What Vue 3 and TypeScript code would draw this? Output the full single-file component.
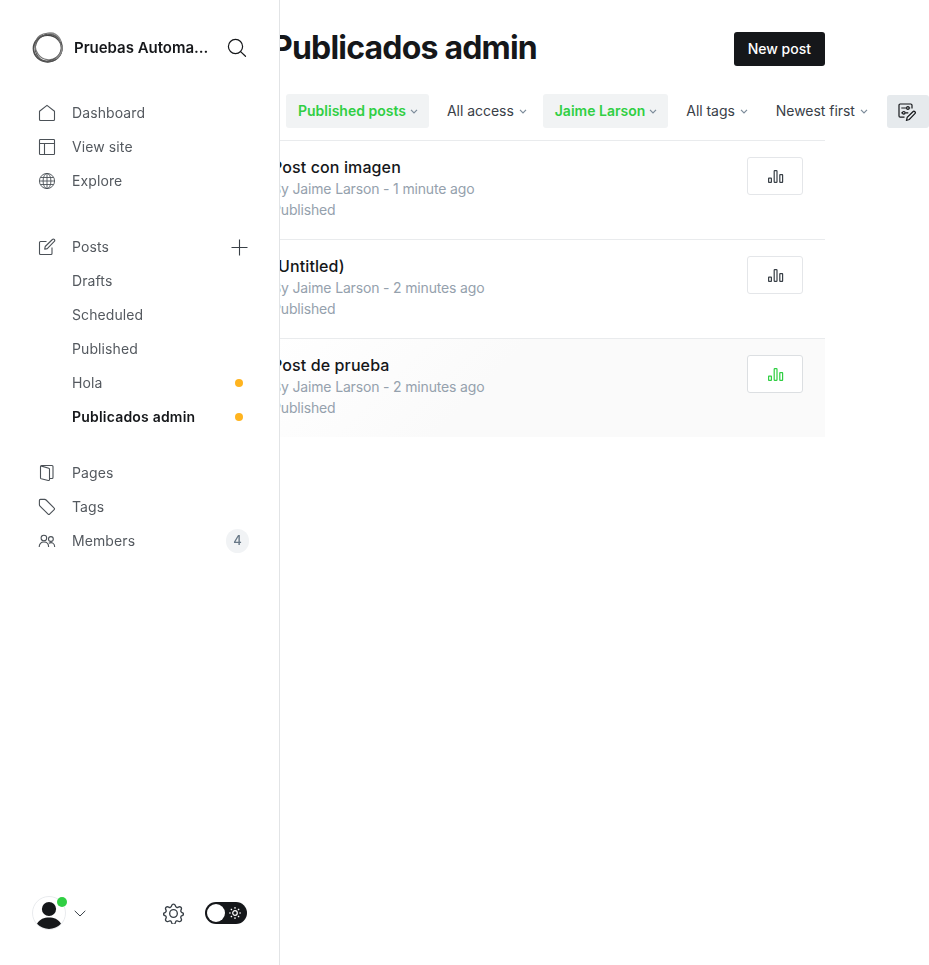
<script setup lang="ts">
interface Post {
  title: string
  byline: string
  active?: boolean
}

interface Filter {
  label: string
  selected?: boolean
}

const posts: Post[] = [
  { title: 'Post con imagen', byline: 'By Jaime Larson - 1 minute ago' },
  { title: '(Untitled)', byline: 'By Jaime Larson - 2 minutes ago' },
  { title: 'Post de prueba', byline: 'By Jaime Larson - 2 minutes ago', active: true },
]

const filters: Filter[] = [
  { label: 'Published posts', selected: true },
  { label: 'All access' },
  { label: 'Jaime Larson', selected: true },
  { label: 'All tags' },
  { label: 'Newest first' },
]

const views = [
  { label: 'Drafts' },
  { label: 'Scheduled' },
  { label: 'Published' },
  { label: 'Hola', dot: true },
  { label: 'Publicados admin', dot: true, current: true },
]
</script>

<template>
  <div class="app">
    <nav class="sidebar">
      <header class="site">
        <svg class="logo" viewBox="0 0 32 32" fill="none">
          <ellipse cx="15.6" cy="16.6" rx="14.2" ry="13.4" stroke="#444" stroke-width="1.5" />
          <ellipse cx="16.6" cy="15.6" rx="13.3" ry="13.9" stroke="#555" stroke-width="1.2" transform="rotate(28 16 16)" />
          <ellipse cx="17" cy="15" rx="12.7" ry="13.6" stroke="#777" stroke-width="1.3" transform="rotate(-38 16 16)" />
          <ellipse cx="15.6" cy="16.2" rx="13" ry="14.2" stroke="#555" stroke-width=".9" transform="rotate(65 16 16)" />
          <path d="M15 1.800C21-.5 27 3 29 10M29.800 13c1 6-2 11-6 14" stroke="#888" stroke-width="1.500" />
        </svg>
        <span class="site-name">Pruebas Automa...</span>
        <svg class="search" viewBox="0 0 20 20" fill="none" stroke="#15171a" stroke-width="1.2" stroke-linecap="round">
          <circle cx="8.5" cy="8.5" r="7.1" /><path d="M13.600 13.600l4.900 4.700" />
        </svg>
      </header>

      <div class="group">
        <a class="item">
          <svg class="icon" viewBox="0 0 18 18"><path d="M1.500 7.200L9 1.400l7.500 5.800v8.300a1 1 0 0 1-1 1h-13a1 1 0 0 1-1-1z" /></svg>
          <span>Dashboard</span>
        </a>
        <a class="item">
          <svg class="icon" viewBox="0 0 18 18"><rect x="1.5" y="1.5" width="15" height="15" rx=".8" /><path d="M1.5 5.5h15M6.5 5.5v11" /></svg>
          <span>View site</span>
        </a>
        <a class="item">
          <svg class="icon thin" viewBox="0 0 18 18"><circle cx="9" cy="9" r="7.6" /><ellipse cx="9" cy="9" rx="3.900" ry="7.600" /><path d="M9 1.400v15.200M1.400 9h15.200M2.600 5.500h12.800M2.600 12.500h12.800" /></svg>
          <span>Explore</span>
        </a>
      </div>

      <div class="group">
        <a class="item">
          <svg class="icon" viewBox="0 0 18 18"><path d="M8.500 3.500H2.500a1 1 0 0 0-1 1v11a1 1 0 0 0 1 1h10.500a1 1 0 0 0 1-1V9.500" /><path d="M6.700 11.200l.5-2.700 7.200-7a1.300 1.300 0 0 1 1.900 1.900l-7 7.200z" /></svg>
          <span>Posts</span>
          <svg class="plus" viewBox="0 0 17 17"><path d="M8.5 .5v16M.5 8.5h16" /></svg>
        </a>
        <a v-for="view in views" :key="view.label" class="item child" :class="{ current: view.current }">
          <span>{{ view.label }}</span>
          <i v-if="view.dot" class="dot"></i>
        </a>
      </div>

      <div class="group">
        <a class="item">
          <svg class="icon" viewBox="0 0 18 18"><path d="M11.500 14.500h2.500a1 1 0 0 0 1-1v-11a1 1 0 0 0-1-1H3.500a1 1 0 0 0-1 1v11.200a1 1 0 0 0 .7 1l7 1.800a1 1 0 0 0 1.300-1V5.300a1 1 0 0 0-.7-1L2.800 1.900" /></svg>
          <span>Pages</span>
        </a>
        <a class="item">
          <svg class="icon" viewBox="0 0 18 18"><path d="M2.400 1.400h4.300a2 2 0 0 1 1.400.6l8.100 8.100a1 1 0 0 1 0 1.500l-4.600 4.600a1 1 0 0 1-1.500 0L2 8.100a2 2 0 0 1-.6-1.400V2.400a1 1 0 0 1 1-1z" /></svg>
          <span>Tags</span>
        </a>
        <a class="item">
          <svg class="icon" viewBox="0 0 18 18"><circle cx="5.900" cy="6" r="2.800" /><circle cx="12.900" cy="7" r="2.400" /><path d="M1.200 15c0-3.300 1.800-5 4.700-5s4.700 1.700 4.700 5M10.800 11.200c2.900-1.500 5.900 0 5.900 3.800" /></svg>
          <span>Members</span>
          <b class="count">4</b>
        </a>
      </div>

      <footer class="account">
        <div class="avatar">
          <svg viewBox="0 0 34 34">
            <circle cx="17" cy="17" r="16.500" fill="#fff" stroke="#e9ebee" />
            <circle cx="17" cy="13" r="7.100" fill="#15171a" />
            <path d="M5 27.700c3-4.600 7-6.200 12-6.200s9 1.600 12 6.200a16.500 16.500 0 0 1-24 0z" fill="#15171a" />
          </svg>
          <i class="online"></i>
        </div>
        <svg class="chevron" viewBox="0 0 12 7"><path d="M.7 .8L6 6 11.300 .8" /></svg>
        <svg class="gear" viewBox="0 0 22 22">
          <circle cx="11" cy="11" r="4" />
          <path d="M9.100 2.600a2 2 0 0 1 3.800 0l.3.900a1.800 1.800 0 0 0 2.500 1l.9-.4a2 2 0 0 1 2.600 2.600l-.4.900a1.800 1.800 0 0 0 1 2.400l.5.200a1.500 1.500 0 0 1 0 2.900l-.5.200a1.800 1.800 0 0 0-1 2.500l.4.900a2 2 0 0 1-2.600 2.600l-.9-.4a1.800 1.800 0 0 0-2.500 1l-.3.900a2 2 0 0 1-3.800 0l-.3-.9a1.800 1.800 0 0 0-2.500-1l-.9.400a2 2 0 0 1-2.600-2.600l.4-.9a1.800 1.800 0 0 0-1-2.500l-.5-.2a1.500 1.500 0 0 1 0-2.900l.5-.2a1.800 1.800 0 0 0 1-2.400l-.4-.9a2 2 0 0 1 2.600-2.600l.9.400a1.800 1.800 0 0 0 2.500-1z" />
        </svg>
        <div class="toggle">
          <i class="knob"></i>
          <svg viewBox="0 0 12 12"><circle cx="6" cy="6" r="2.300" /><path d="M6 0v1.800M6 10.200V12M0 6h1.800M10.200 6H12M1.800 1.800L3 3M9 9l1.200 1.200M10.200 1.800L9 3M3 9l-1.200 1.200" /></svg>
        </div>
      </footer>
    </nav>

    <main class="main">
      <div class="content">
        <header class="heading">
          <h1>Publicados admin</h1>
          <button class="new-post">New post</button>
        </header>

        <div class="filters">
          <button v-for="filter in filters" :key="filter.label" class="filter" :class="{ selected: filter.selected }">
            <span>{{ filter.label }}</span>
            <svg viewBox="0 0 8 5"><path d="M1 .8l3 3 3-3" /></svg>
          </button>
          <button class="customize">
            <svg viewBox="0 0 18 18">
              <path d="M6.500 14.200H2.200a1.200 1.200 0 0 1-1.200-1.200V2.200A1.200 1.200 0 0 1 2.200 1h10.600A1.200 1.200 0 0 1 14 2.200v3.300M3.300 5h5.200M3.300 9.800h1M7.300 9.800h3" />
              <circle cx="9.900" cy="5" r="1.300" /><circle cx="5.800" cy="9.800" r="1.300" /><path d="M11.200 5h1" />
              <path d="M8.500 17.300l.7-3 5.700-5.600a1.400 1.400 0 0 1 2 2l-5.600 5.800z" />
            </svg>
          </button>
        </div>

        <ol class="posts">
          <li v-for="post in posts" :key="post.title" class="post" :class="{ active: post.active }">
            <div class="details">
              <h3>{{ post.title }}</h3>
              <p>{{ post.byline }}</p>
              <p>Published</p>
            </div>
            <a class="stats">
              <svg viewBox="0 0 16 14"><rect x=".6" y="8.100" width="2.800" height="4.300" rx=".3" /><rect x="6.200" y=".6" width="2.800" height="11.800" rx=".6" /><rect x="11.800" y="4.600" width="2.800" height="7.800" rx=".3" /></svg>
            </a>
          </li>
        </ol>
      </div>
    </main>
  </div>
</template>

<style>
body {
  margin: 0;
  background: #fff;
}
</style>

<style scoped>
* {
  box-sizing: border-box;
}

svg {
  display: block;
  flex: none;
}

button {
  border: 0;
  font: inherit;
}

.app {
  display: flex;
  height: 965px;
  overflow: hidden;
  font-family: Inter, sans-serif;
  font-size: 14px;
  color: #15171a;
}

.sidebar {
  display: flex;
  flex: none;
  flex-direction: column;
  width: 280px;
  padding: 32px 30px 35px 32px;
  border-right: 1px solid #e2e4e6;
  background: #fff;
  will-change: transform;
}

.site {
  display: flex;
  align-items: center;
  height: 32px;
  margin-bottom: 32px;
}

.logo {
  width: 32px;
  height: 32px;
}

.site-name {
  flex: 1;
  margin-left: 10px;
  padding-bottom: 1px;
  font-size: 15px;
  font-weight: 600;
  letter-spacing: -0.02px;
  white-space: nowrap;
}

.search {
  width: 20px;
  height: 20px;
  margin-right: 2px;
}

.group {
  display: flex;
  flex-direction: column;
  margin-bottom: 32px;
}

.group + .group {
  margin-bottom: 22px;
}

.item {
  display: flex;
  align-items: center;
  height: 34px;
  padding-left: 6px;
  letter-spacing: 0.1px;
  color: #54595f;
}

.item > span {
  flex: 1;
  padding-bottom: 1px;
}

.icon {
  width: 18px;
  height: 18px;
  margin-right: 16px;
  fill: none;
  stroke: #4b5157;
  stroke-width: 1.1;
  stroke-linejoin: round;
}

.thin {
  stroke-width: 0.9;
}

.child {
  padding-left: 40px;
}

.current {
  font-weight: 600;
  letter-spacing: 0.2px;
  color: #15171a;
}

.plus {
  width: 17px;
  height: 17px;
  margin-right: 1.5px;
  stroke: #394047;
  stroke-width: 1.1;
}

.dot {
  width: 8px;
  height: 8px;
  margin-right: 6px;
  border-radius: 50%;
  background: #ffb41f;
}

.count {
  width: 23px;
  height: 24px;
  border-radius: 12px;
  background: #f1f3f5;
  font-size: 13px;
  font-weight: 500;
  line-height: 23px;
  text-align: center;
  color: #687887;
}

.account {
  display: flex;
  align-items: center;
  height: 34px;
  margin-top: auto;
}

.avatar {
  position: relative;
  width: 34px;
  height: 34px;
}

.avatar > svg {
  width: 34px;
  height: 34px;
}

.online {
  position: absolute;
  top: 1px;
  right: -1px;
  width: 10px;
  height: 10px;
  border-radius: 50%;
  background: #30cf43;
}

.chevron {
  width: 12px;
  height: 7px;
  margin-left: 8px;
  fill: none;
  stroke: #394047;
}

.gear {
  width: 21px;
  height: 21px;
  margin-left: auto;
  fill: none;
  stroke: #394047;
  stroke-width: 1.4;
}

.toggle {
  display: flex;
  align-items: center;
  justify-content: space-between;
  width: 42px;
  height: 22px;
  margin: 0 2px 0 21.5px;
  padding: 0 6px 0 2px;
  border-radius: 11px;
  background: #15171a;
}

.toggle svg {
  width: 12px;
  height: 12px;
  fill: none;
  stroke: #fff;
  stroke-width: 1.2;
}

.knob {
  width: 18px;
  height: 18px;
  border-radius: 50%;
  background: #fff;
}

.main {
  flex: 1;
  min-width: 0;
  overflow: hidden;
}

.content {
  width: 553px;
  margin-left: -8px;
}

.heading {
  display: flex;
  align-items: center;
  justify-content: space-between;
  height: 94px;
  padding-top: 4px;
}

h1 {
  margin: 0;
  padding-bottom: 3px;
  font-size: 32px;
  font-weight: 700;
  line-height: 40px;
  letter-spacing: -0.8px;
}

.new-post {
  height: 34px;
  padding: 0 14px 1px;
  border-radius: 3px;
  background: #15171a;
  font-weight: 500;
  color: #fff;
}

.filters {
  display: flex;
  gap: 6px;
  width: 657px;
  height: 46px;
  padding-left: 14px;
}

.filter {
  display: flex;
  flex: none;
  align-items: center;
  gap: 5px;
  height: 34px;
  padding: 0 10px 0 12px;
  border-radius: 3px;
  background: none;
  color: #394047;
}

.filter span {
  padding-bottom: 1px;
  letter-spacing: -0.04px;
}

.filter svg {
  width: 8px;
  height: 5px;
  fill: none;
  stroke: #7c8b9a;
  stroke-width: 1.2;
}

.filter.selected {
  gap: 4px;
  padding-right: 11px;
  background: #f1f3f4;
  font-weight: 600;
  color: #30cf43;
}

.filter.selected span {
  letter-spacing: 0;
}

.customize {
  display: flex;
  align-items: center;
  justify-content: center;
  flex: none;
  width: 42px;
  height: 33px;
  margin: 1px 0 0 auto;
  padding: 0 2px 0 0;
  border-radius: 3px;
  background: #e6eaed;
}

.customize svg {
  width: 18px;
  height: 18px;
  fill: none;
  stroke: #15171a;
  stroke-width: 1.2;
}

.posts {
  margin: 0;
  padding: 0;
  list-style: none;
}

.post {
  display: flex;
  justify-content: space-between;
  height: 99px;
  padding: 16px 22px 0 0;
  border-top: 1px solid #e9ebed;
}

.active {
  background: linear-gradient(315deg, #fafafa 60%, #fff);
}

.details {
  margin-top: -1px;
}

h3 {
  margin: 0;
  font-size: 16px;
  font-weight: 500;
  line-height: 22px;
  letter-spacing: 0.11px;
}

p {
  margin: 0;
  line-height: 21px;
  letter-spacing: -0.16px;
  color: #95a1ad;
}

.stats {
  display: flex;
  align-items: center;
  justify-content: center;
  width: 56px;
  height: 38px;
  padding: 1px 0 0 2px;
  border: 1px solid #e4e6e9;
  border-radius: 3px;
  background: #fff;
}

.stats svg {
  width: 16px;
  height: 14px;
  fill: none;
  stroke: #394047;
  stroke-width: 1.2;
}

.active .stats {
  border-color: #dcdfe2;
}

.active .stats svg {
  stroke: #30cf43;
}
</style>
